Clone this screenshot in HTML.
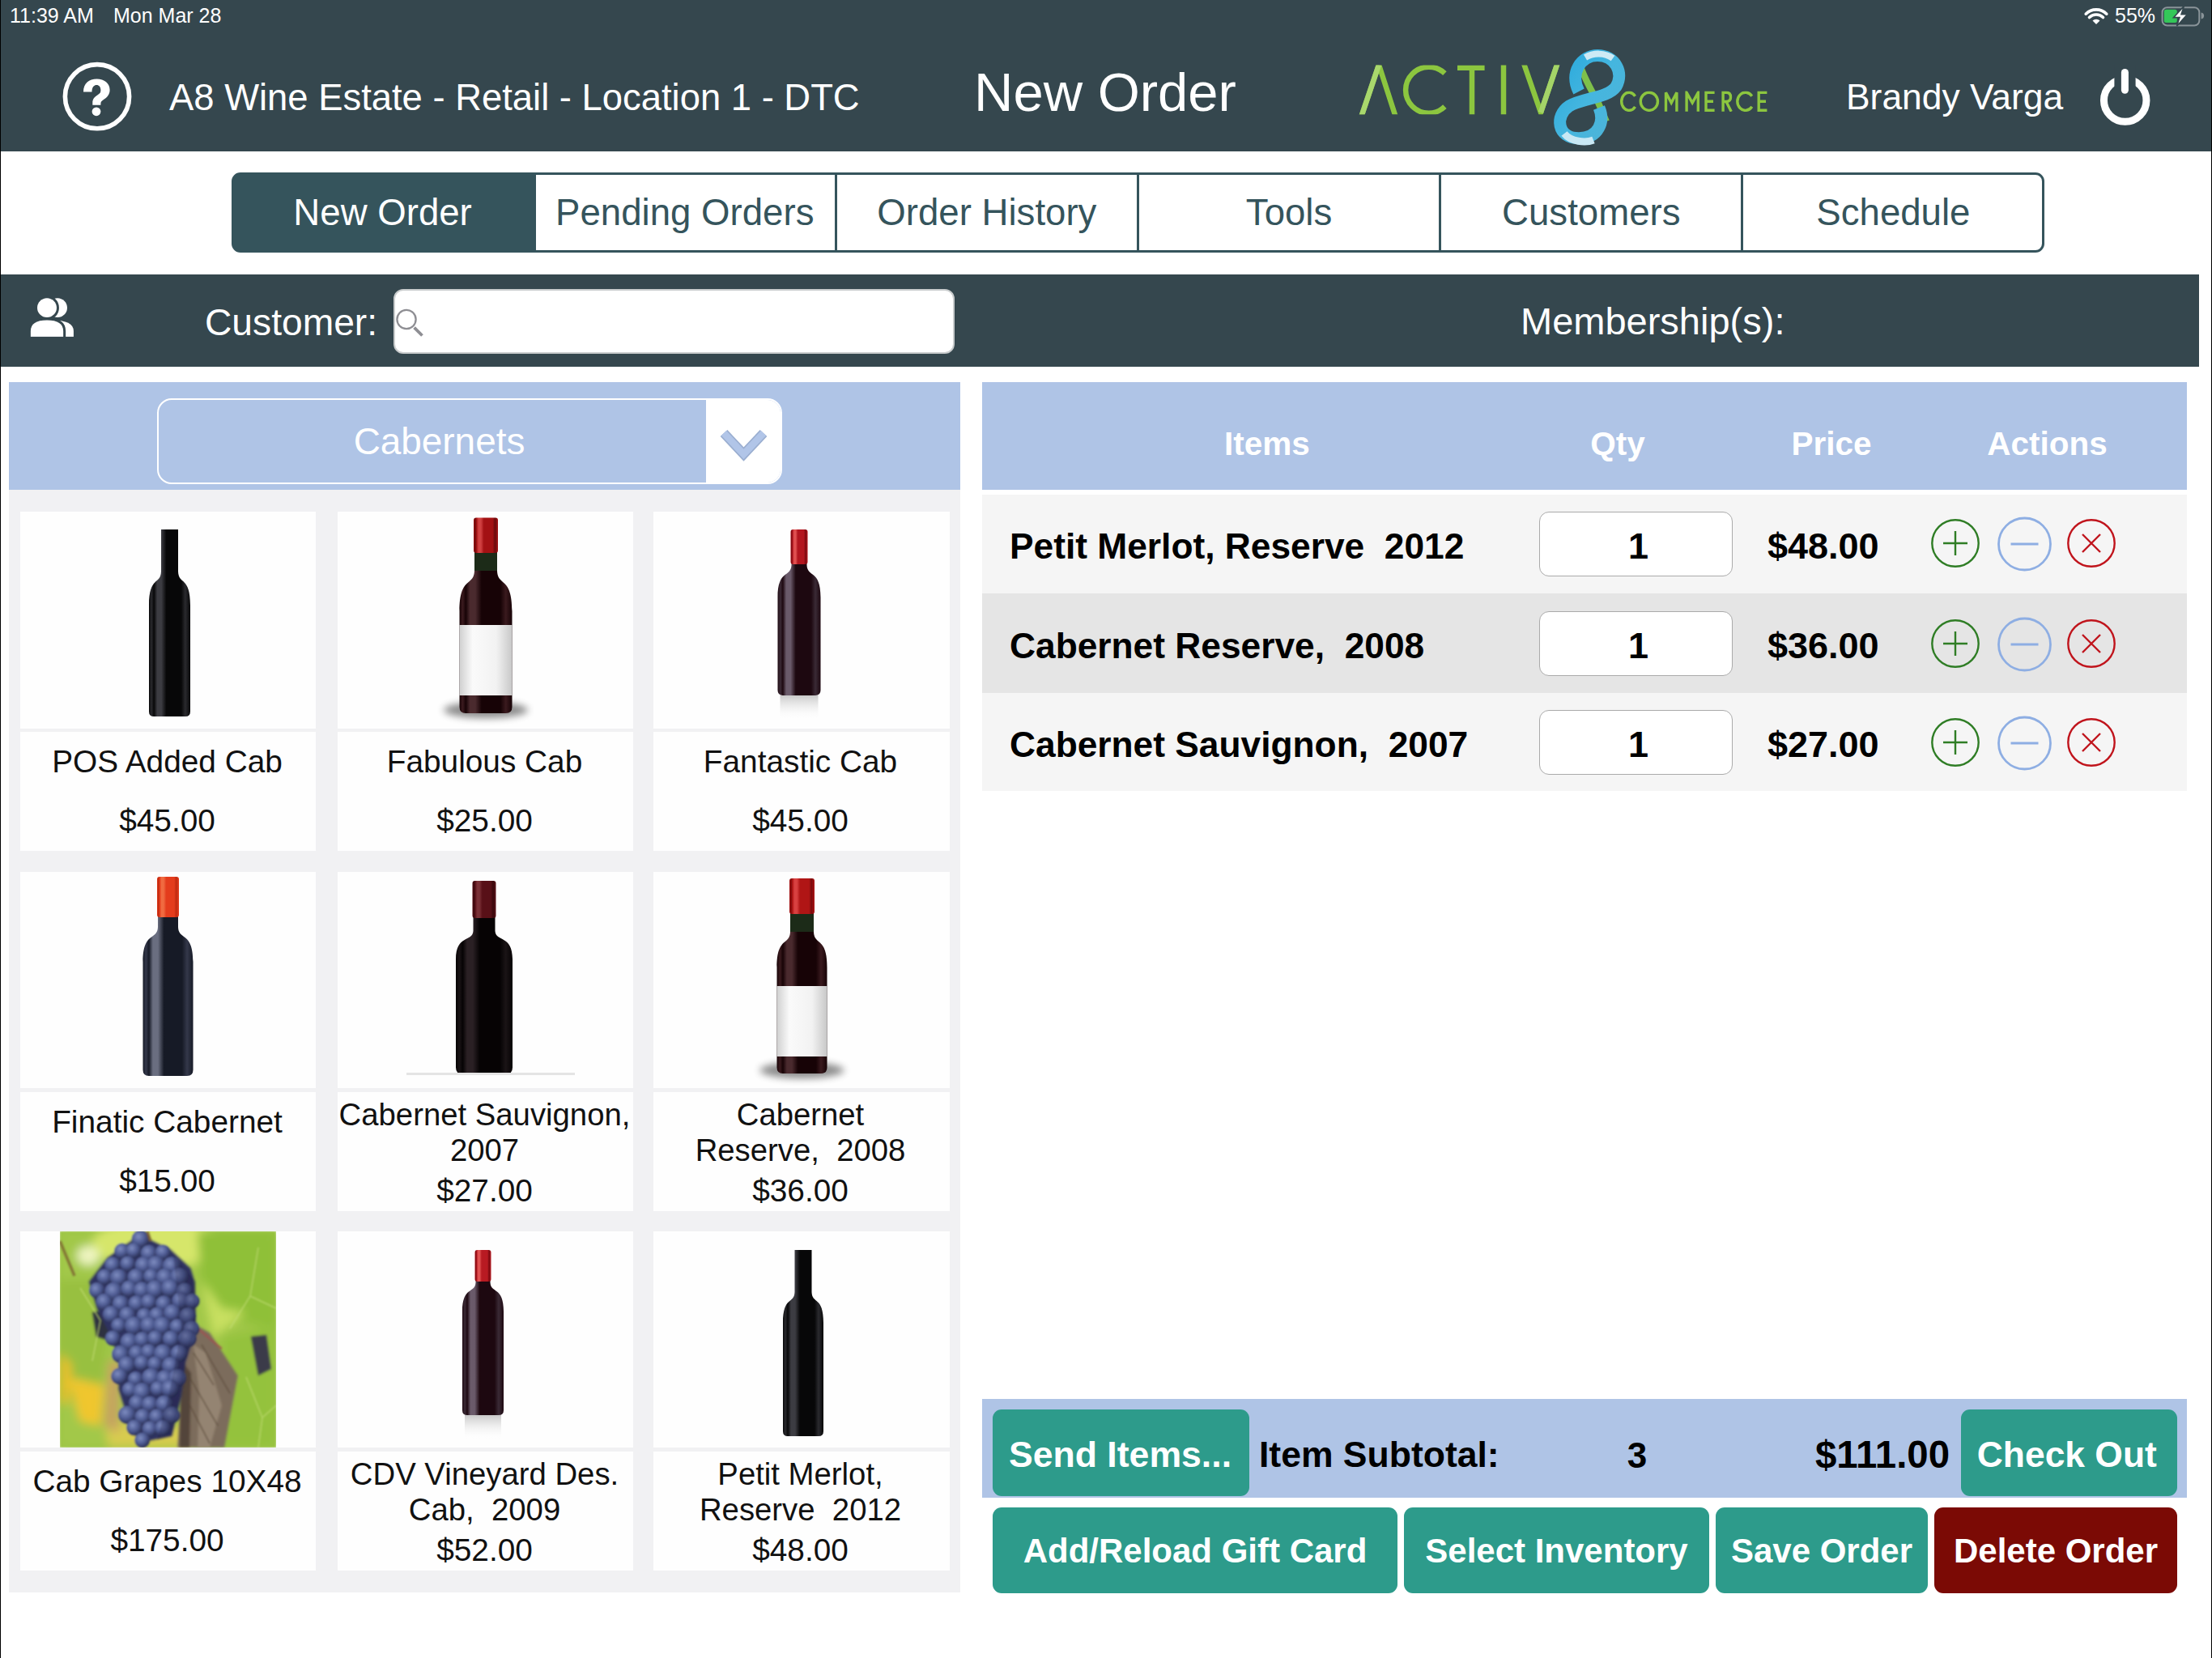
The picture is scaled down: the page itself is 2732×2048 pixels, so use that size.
<!DOCTYPE html>
<html><head><meta charset="utf-8"><style>
html,body{margin:0;padding:0;width:2732px;height:2048px;overflow:hidden;background:#fff}
.t{position:absolute;font-family:"Liberation Sans", sans-serif;line-height:1;white-space:pre}
.r{position:absolute}
</style></head><body>
<div class="r" style="left:0px;top:0px;width:2732px;height:2048px;background:#ffffff;"></div>
<div class="r" style="left:0px;top:0px;width:2732px;height:187px;background:#35474e;"></div>
<div class="t" style="left:12.0px;top:6.8px;font-size:25px;color:#fff;font-weight:400;">11:39 AM</div>
<div class="t" style="left:140.0px;top:6.8px;font-size:25px;color:#fff;font-weight:400;">Mon Mar 28</div>
<div class="t" style="left:2612.0px;top:6.8px;font-size:25px;color:#fff;font-weight:400;">55%</div>
<svg class="r" style="left:2572px;top:6px" width="34" height="26" viewBox="0 0 34 26">
<path d="M17 24 L12.5 19.5 A6.5 6.5 0 0 1 21.5 19.5 Z" fill="#fff"/>
<path d="M8.5 15.5 A12 12 0 0 1 25.5 15.5" stroke="#fff" stroke-width="3.6" fill="none" stroke-linecap="round"/>
<path d="M4.2 11.2 A18 18 0 0 1 29.8 11.2" stroke="#fff" stroke-width="3.6" fill="none" stroke-linecap="round"/>
</svg>
<svg class="r" style="left:2668px;top:7px" width="58" height="28" viewBox="0 0 58 28">
<rect x="2.6" y="2.2" width="45.7" height="22.3" rx="6" fill="none" stroke="#8a9499" stroke-width="2"/>
<rect x="4.8" y="4.7" width="16" height="16.3" rx="2.5" fill="#34c759"/>
<path d="M50.6 8.5 Q54.1 9 54.1 12.5 Q54.1 16 50.6 16.5 Z" fill="#8a9499"/>
<path d="M29.5 0.4 L16.5 14.6 L24 14.6 L20.5 25.2 L33.5 10.8 L26 10.8 Z" fill="#fff" stroke="#35474e" stroke-width="1.6" stroke-linejoin="miter"/>
</svg>
<svg class="r" style="left:74px;top:74px" width="92" height="92" viewBox="0 0 92 92">
<circle cx="46" cy="45.2" r="39.6" stroke="#fff" stroke-width="5.6" fill="none"/>
<path d="M29 39.5 C29 29 36 23.6 45.5 23.6 C55 23.6 61.6 29 61.6 37 C61.6 43 58 46.5 54 49 C51.5 50.5 50.4 52 50.4 54 L50.4 55.8 L40.3 55.8 L40.3 53 C40.3 48 43 45.5 47 43 C49.5 41.5 50.4 40 50.4 37.5 C50.4 33 48 30.9 45.5 30.9 C42 30.9 39.5 33.5 39.5 39.5 Z" fill="#fff"/>
<circle cx="45" cy="63.8" r="5.4" fill="#fff"/>
</svg>
<div class="t" style="left:209.0px;top:97.6px;font-size:45.4px;color:#fff;font-weight:400;">A8 Wine Estate - Retail - Location 1 - DTC</div>
<div class="t" style="left:1203.0px;top:80.3px;font-size:67px;color:#fff;font-weight:400;">New Order</div>
<div class="t" style="left:2280.0px;top:98.4px;font-size:44.4px;color:#fff;font-weight:400;">Brandy Varga</div>
<svg class="r" style="left:2588px;top:80px" width="74" height="80" viewBox="0 0 74 80">
<circle cx="36.7" cy="44" r="26.25" stroke="#fff" stroke-width="9" fill="none"/>
<rect x="23.4" y="0" width="26.2" height="27" fill="#35474e"/>
<line x1="36.4" y1="9.5" x2="36.4" y2="31.3" stroke="#fff" stroke-width="9" stroke-linecap="round"/>
</svg>
<svg class="r" style="left:1670px;top:55px" width="530" height="130" viewBox="0 0 530 130">
<defs>
<linearGradient id="g8" x1="0" y1="0" x2="1" y2="1">
<stop offset="0" stop-color="#29a9dc"/><stop offset="0.5" stop-color="#45b6df"/><stop offset="1" stop-color="#4fb3d6"/>
</linearGradient>
<linearGradient id="g8b" x1="0" y1="0" x2="1" y2="0">
<stop offset="0" stop-color="#cdeaf5"/><stop offset="1" stop-color="#5fc3ea"/>
</linearGradient>
</defs>
<clipPath id="lc"><rect x="0" y="25.5" width="270" height="60.8"/></clipPath>
<g stroke="#8cc63f" stroke-width="6.5" fill="none" stroke-linejoin="miter" clip-path="url(#lc)">
<path d="M11 90 L33 25 L54 90" />
<path d="M11 90 L33 25" stroke="#a9d86d"/>
<path d="M114.4 35.7 A28.5 28.5 0 1 0 114.4 76.7"/>
<path d="M130 28.8 L163.6 28.8 M148 28.8 L148 90"/>
<path d="M187 20 L187 90"/>
<path d="M211.5 22 L233 84 L254 22"/>
<path d="M233 84 L254 22" stroke="#a4d468"/>
</g>
<path d="M281 24 C 286 40, 296 58, 304 72 L314 95" stroke="#7fc04a" stroke-width="8" fill="none"/>
<path d="M280 58 C 268 35, 283 13.5, 303 13.5 C 325 13.5, 336 35, 326 52 C 316 66, 285 66, 268 76 C 250 88, 253 115.7, 280 115.7 C 305 115.7, 312 95, 305 78" stroke="url(#g8)" stroke-width="15" fill="none" stroke-linecap="butt"/>
<path d="M288 16 C 298 10, 312 10, 322 17" stroke="#cdeaf5" stroke-width="8" fill="none"/>
<path d="M262 110 C 270 120, 288 122, 298 118" stroke="#c9e8f4" stroke-width="9" fill="none"/>
<clipPath id="cc"><rect x="330" y="57.5" width="190" height="25.6"/></clipPath>
<g stroke="#8cc63f" stroke-width="3.4" fill="none" stroke-linejoin="miter" clip-path="url(#cc)">
<path d="M349.5 63.8 A9.3 11.05 0 1 0 349.5 76.8"/>
<ellipse cx="366.85" cy="70.3" rx="10.6" ry="11.05"/>
<path d="M387.5 82.8 L387.5 59.3 L394.2 72 L400.9 59.3 L400.9 82.8"/>
<path d="M413.1 82.8 L413.1 59.3 L420.2 72 L427.3 59.3 L427.3 82.8"/>
<path d="M447.6 59.3 L437 59.3 L437 81.3 L447.6 81.3 M437 70.3 L446 70.3"/>
<path d="M458.1 82.8 L458.1 59.3 L462 59.3 Q467.5 59.3 467.5 65 Q467.5 70.5 462 70.5 L458.1 70.5 M462 70.5 L468.2 82.8"/>
<path d="M493.8 63.8 A9.95 11.05 0 1 0 493.8 76.8"/>
<path d="M512.4 59.3 L502.2 59.3 L502.2 81.3 L512.4 81.3 M502.2 70.3 L511 70.3"/>
</g>
</svg>
<div class="r" style="left:286px;top:213px;width:2239px;height:99px;box-sizing:border-box;border:3px solid #35545c;border-radius:11px;background:linear-gradient(to right,#35545c 373.2px,#fff 373.2px)"></div>
<div class="r" style="left:658px;top:213px;width:3px;height:99px;background:#35545c;"></div>
<div class="r" style="left:1031px;top:213px;width:3px;height:99px;background:#35545c;"></div>
<div class="r" style="left:1404px;top:213px;width:3px;height:99px;background:#35545c;"></div>
<div class="r" style="left:1777px;top:213px;width:3px;height:99px;background:#35545c;"></div>
<div class="r" style="left:2150px;top:213px;width:3px;height:99px;background:#35545c;"></div>
<div class="t" style="left:286.0px;top:240.4px;width:373.1666666666667px;text-align:center;font-size:45.6px;color:#fff;font-weight:400;">New Order</div>
<div class="t" style="left:659.2px;top:240.4px;width:373.1666666666667px;text-align:center;font-size:45.6px;color:#35545c;font-weight:400;">Pending Orders</div>
<div class="t" style="left:1032.3px;top:240.4px;width:373.1666666666667px;text-align:center;font-size:45.6px;color:#35545c;font-weight:400;">Order History</div>
<div class="t" style="left:1405.5px;top:240.4px;width:373.1666666666667px;text-align:center;font-size:45.6px;color:#35545c;font-weight:400;">Tools</div>
<div class="t" style="left:1778.7px;top:240.4px;width:373.1666666666667px;text-align:center;font-size:45.6px;color:#35545c;font-weight:400;">Customers</div>
<div class="t" style="left:2151.8px;top:240.4px;width:373.1666666666667px;text-align:center;font-size:45.6px;color:#35545c;font-weight:400;">Schedule</div>
<div class="r" style="left:1px;top:339px;width:2715px;height:114px;background:#35474e;"></div>
<svg class="r" style="left:36px;top:364px" width="58" height="56" viewBox="0 0 58 56">
<circle cx="35" cy="16.15" r="11.95" fill="#fff"/>
<path d="M28 31.6 Q54.9 31.6 54.9 45 L54.9 51.9 L28 51.9 Z" fill="#fff"/>
<circle cx="22" cy="16.15" r="11.95" fill="#fff" stroke="#35474e" stroke-width="6" paint-order="stroke"/>
<path d="M1.86 51.9 L1.86 45 Q1.86 31.4 22 31.4 Q42.16 31.4 42.16 45 L42.16 51.9 Z" fill="#fff" stroke="#35474e" stroke-width="6" paint-order="stroke"/>
<rect x="0" y="51.9" width="58" height="4.1" fill="#35474e"/>
</svg>
<div class="t" style="left:253.0px;top:374.6px;font-size:46.2px;color:#fff;font-weight:400;">Customer:</div>
<div class="r" style="left:486px;top:357px;width:693px;height:80px;box-sizing:border-box;background:#fff;border:2px solid #c9cccd;border-radius:12px"></div>
<svg class="r" style="left:486px;top:378px" width="40" height="40" viewBox="0 0 40 40">
<circle cx="16" cy="16.5" r="11.6" stroke="#8e8e93" stroke-width="2.3" fill="none"/>
<line x1="25.6" y1="26.7" x2="35.5" y2="36.5" stroke="#8e8e93" stroke-width="3.8" stroke-linecap="butt"/>
</svg>
<div class="t" style="left:1878.0px;top:373.2px;font-size:47px;color:#fff;font-weight:400;">Membership(s):</div>
<div class="r" style="left:11px;top:472px;width:1175px;height:1495px;background:#f1f1f3;"></div>
<div class="r" style="left:11px;top:472px;width:1175px;height:133px;background:#afc4e6;"></div>
<div class="r" style="left:194px;top:492px;width:772px;height:106px;box-sizing:border-box;border:2.5px solid #fff;border-radius:18px;overflow:hidden"><div class="r" style="left:676px;top:0;width:100px;height:100%;background:#fff"></div></div>
<svg class="r" style="left:884px;top:522px" width="70" height="52" viewBox="0 0 70 52">
<path d="M10 13 L34.5 39 L59 13" stroke="#9aaed0" stroke-width="12" fill="none" stroke-linecap="butt" stroke-linejoin="miter"/>
<path d="M10 13 L34.5 39 L59 13" stroke="#b1c5e8" stroke-width="8.5" fill="none" stroke-linecap="butt" stroke-linejoin="miter"/>
</svg>
<div class="t" style="left:242.5px;top:522.8px;width:600px;text-align:center;font-size:45.9px;color:#fff;font-weight:400;">Cabernets</div>
<div class="r" style="left:25px;top:632px;width:365px;height:268px;background:#fefefe;"></div>
<div class="r" style="left:25px;top:904px;width:365px;height:147px;background:#fefefe;"></div>
<div class="t" style="left:24.0px;top:922.2px;width:365px;text-align:center;font-size:38.8px;color:#111;font-weight:400;">POS Added Cab</div>
<div class="t" style="left:24.0px;top:995.2px;width:365px;text-align:center;font-size:38.8px;color:#111;font-weight:400;">$45.00</div>
<div class="r" style="left:417px;top:632px;width:365px;height:268px;background:#fefefe;"></div>
<div class="r" style="left:417px;top:904px;width:365px;height:147px;background:#fefefe;"></div>
<div class="t" style="left:416.0px;top:922.2px;width:365px;text-align:center;font-size:38.8px;color:#111;font-weight:400;">Fabulous Cab</div>
<div class="t" style="left:416.0px;top:995.2px;width:365px;text-align:center;font-size:38.8px;color:#111;font-weight:400;">$25.00</div>
<div class="r" style="left:807px;top:632px;width:366px;height:268px;background:#fefefe;"></div>
<div class="r" style="left:807px;top:904px;width:366px;height:147px;background:#fefefe;"></div>
<div class="t" style="left:806.0px;top:922.2px;width:365px;text-align:center;font-size:38.8px;color:#111;font-weight:400;">Fantastic Cab</div>
<div class="t" style="left:806.0px;top:995.2px;width:365px;text-align:center;font-size:38.8px;color:#111;font-weight:400;">$45.00</div>
<div class="r" style="left:25px;top:1077px;width:365px;height:267px;background:#fefefe;"></div>
<div class="r" style="left:25px;top:1349px;width:365px;height:147px;background:#fefefe;"></div>
<div class="t" style="left:24.0px;top:1367.2px;width:365px;text-align:center;font-size:38.8px;color:#111;font-weight:400;">Finatic Cabernet</div>
<div class="t" style="left:24.0px;top:1440.2px;width:365px;text-align:center;font-size:38.8px;color:#111;font-weight:400;">$15.00</div>
<div class="r" style="left:417px;top:1077px;width:365px;height:267px;background:#fefefe;"></div>
<div class="r" style="left:417px;top:1349px;width:365px;height:147px;background:#fefefe;"></div>
<div class="t" style="left:406.0px;top:1357.6px;width:385px;text-align:center;font-size:38.3px;color:#111;font-weight:400;">Cabernet Sauvignon,</div>
<div class="t" style="left:406.0px;top:1401.6px;width:385px;text-align:center;font-size:38.3px;color:#111;font-weight:400;">2007</div>
<div class="t" style="left:416.0px;top:1452.2px;width:365px;text-align:center;font-size:38.8px;color:#111;font-weight:400;">$27.00</div>
<div class="r" style="left:807px;top:1077px;width:366px;height:267px;background:#fefefe;"></div>
<div class="r" style="left:807px;top:1349px;width:366px;height:147px;background:#fefefe;"></div>
<div class="t" style="left:796.0px;top:1357.6px;width:385px;text-align:center;font-size:38.3px;color:#111;font-weight:400;">Cabernet</div>
<div class="t" style="left:796.0px;top:1401.6px;width:385px;text-align:center;font-size:38.3px;color:#111;font-weight:400;">Reserve,&nbsp; 2008</div>
<div class="t" style="left:806.0px;top:1452.2px;width:365px;text-align:center;font-size:38.8px;color:#111;font-weight:400;">$36.00</div>
<div class="r" style="left:25px;top:1521px;width:365px;height:267px;background:#fefefe;"></div>
<div class="r" style="left:25px;top:1793px;width:365px;height:147px;background:#fefefe;"></div>
<div class="t" style="left:24.0px;top:1811.2px;width:365px;text-align:center;font-size:38.8px;color:#111;font-weight:400;">Cab Grapes 10X48</div>
<div class="t" style="left:24.0px;top:1884.2px;width:365px;text-align:center;font-size:38.8px;color:#111;font-weight:400;">$175.00</div>
<div class="r" style="left:417px;top:1521px;width:365px;height:267px;background:#fefefe;"></div>
<div class="r" style="left:417px;top:1793px;width:365px;height:147px;background:#fefefe;"></div>
<div class="t" style="left:406.0px;top:1801.6px;width:385px;text-align:center;font-size:38.3px;color:#111;font-weight:400;">CDV Vineyard Des.</div>
<div class="t" style="left:406.0px;top:1845.6px;width:385px;text-align:center;font-size:38.3px;color:#111;font-weight:400;">Cab,&nbsp; 2009</div>
<div class="t" style="left:416.0px;top:1896.2px;width:365px;text-align:center;font-size:38.8px;color:#111;font-weight:400;">$52.00</div>
<div class="r" style="left:807px;top:1521px;width:366px;height:267px;background:#fefefe;"></div>
<div class="r" style="left:807px;top:1793px;width:366px;height:147px;background:#fefefe;"></div>
<div class="t" style="left:796.0px;top:1801.6px;width:385px;text-align:center;font-size:38.3px;color:#111;font-weight:400;">Petit Merlot,</div>
<div class="t" style="left:796.0px;top:1845.6px;width:385px;text-align:center;font-size:38.3px;color:#111;font-weight:400;">Reserve&nbsp; 2012</div>
<div class="t" style="left:806.0px;top:1896.2px;width:365px;text-align:center;font-size:38.8px;color:#111;font-weight:400;">$48.00</div>
<svg class="r" style="left:0;top:0" width="1200" height="2048" viewBox="0 0 1200 2048">
<defs><filter id="blur" x="-50%" y="-100%" width="200%" height="300%"><feGaussianBlur stdDeviation="5"/></filter><linearGradient id="refl" x1="0" y1="0" x2="0" y2="1"><stop offset="0" stop-color="#666" stop-opacity="0.35"/><stop offset="1" stop-color="#fff" stop-opacity="0"/></linearGradient><linearGradient id="lab" x1="0" y1="0" x2="1" y2="0"><stop offset="0" stop-color="#d0d0d0"/><stop offset="0.25" stop-color="#fafafa"/><stop offset="0.7" stop-color="#f2f2f2"/><stop offset="1" stop-color="#c8c8c8"/></linearGradient><linearGradient id="b1" x1="0" y1="0" x2="1" y2="0"><stop offset="0" stop-color="#070708"/><stop offset="0.06" stop-color="#2a2a2e"/><stop offset="0.12" stop-color="#070708"/><stop offset="0.2" stop-color="#3c3c42"/><stop offset="0.3" stop-color="#3c3c42"/><stop offset="0.42" stop-color="#070708"/><stop offset="0.78" stop-color="#070708"/><stop offset="0.88" stop-color="#2a2a2e"/><stop offset="1" stop-color="#070708"/></linearGradient><linearGradient id="b2" x1="0" y1="0" x2="1" y2="0"><stop offset="0" stop-color="#170306"/><stop offset="0.06" stop-color="#3a1a1e"/><stop offset="0.12" stop-color="#170306"/><stop offset="0.2" stop-color="#4a2a2e"/><stop offset="0.3" stop-color="#4a2a2e"/><stop offset="0.42" stop-color="#170306"/><stop offset="0.78" stop-color="#170306"/><stop offset="0.88" stop-color="#3a1a1e"/><stop offset="1" stop-color="#170306"/></linearGradient><linearGradient id="c2" x1="0" y1="0" x2="1" y2="0"><stop offset="0" stop-color="#a31113"/><stop offset="0.06" stop-color="#6a0a0c"/><stop offset="0.12" stop-color="#a31113"/><stop offset="0.2" stop-color="#d04040"/><stop offset="0.3" stop-color="#d04040"/><stop offset="0.42" stop-color="#a31113"/><stop offset="0.78" stop-color="#a31113"/><stop offset="0.88" stop-color="#6a0a0c"/><stop offset="1" stop-color="#a31113"/></linearGradient><linearGradient id="b3" x1="0" y1="0" x2="1" y2="0"><stop offset="0" stop-color="#1d0810"/><stop offset="0.06" stop-color="#3a2a35"/><stop offset="0.12" stop-color="#1d0810"/><stop offset="0.2" stop-color="#6a5a6a"/><stop offset="0.3" stop-color="#6a5a6a"/><stop offset="0.42" stop-color="#1d0810"/><stop offset="0.78" stop-color="#1d0810"/><stop offset="0.88" stop-color="#3a2a35"/><stop offset="1" stop-color="#1d0810"/></linearGradient><linearGradient id="c3" x1="0" y1="0" x2="1" y2="0"><stop offset="0" stop-color="#b3161f"/><stop offset="0.06" stop-color="#7a0a10"/><stop offset="0.12" stop-color="#b3161f"/><stop offset="0.2" stop-color="#e05050"/><stop offset="0.3" stop-color="#e05050"/><stop offset="0.42" stop-color="#b3161f"/><stop offset="0.78" stop-color="#b3161f"/><stop offset="0.88" stop-color="#7a0a10"/><stop offset="1" stop-color="#b3161f"/></linearGradient><linearGradient id="b4" x1="0" y1="0" x2="1" y2="0"><stop offset="0" stop-color="#161a26"/><stop offset="0.06" stop-color="#34384a"/><stop offset="0.12" stop-color="#161a26"/><stop offset="0.2" stop-color="#6a6e80"/><stop offset="0.3" stop-color="#6a6e80"/><stop offset="0.42" stop-color="#161a26"/><stop offset="0.78" stop-color="#161a26"/><stop offset="0.88" stop-color="#34384a"/><stop offset="1" stop-color="#161a26"/></linearGradient><linearGradient id="c4" x1="0" y1="0" x2="1" y2="0"><stop offset="0" stop-color="#e43c1c"/><stop offset="0.06" stop-color="#c02a10"/><stop offset="0.12" stop-color="#e43c1c"/><stop offset="0.2" stop-color="#f06a40"/><stop offset="0.3" stop-color="#f06a40"/><stop offset="0.42" stop-color="#e43c1c"/><stop offset="0.78" stop-color="#e43c1c"/><stop offset="0.88" stop-color="#c02a10"/><stop offset="1" stop-color="#e43c1c"/></linearGradient><linearGradient id="b5" x1="0" y1="0" x2="1" y2="0"><stop offset="0" stop-color="#060304"/><stop offset="0.06" stop-color="#1a1416"/><stop offset="0.12" stop-color="#060304"/><stop offset="0.2" stop-color="#2a2024"/><stop offset="0.3" stop-color="#2a2024"/><stop offset="0.42" stop-color="#060304"/><stop offset="0.78" stop-color="#060304"/><stop offset="0.88" stop-color="#1a1416"/><stop offset="1" stop-color="#060304"/></linearGradient><linearGradient id="c5" x1="0" y1="0" x2="1" y2="0"><stop offset="0" stop-color="#581017"/><stop offset="0.06" stop-color="#3a080c"/><stop offset="0.12" stop-color="#581017"/><stop offset="0.2" stop-color="#7a3036"/><stop offset="0.3" stop-color="#7a3036"/><stop offset="0.42" stop-color="#581017"/><stop offset="0.78" stop-color="#581017"/><stop offset="0.88" stop-color="#3a080c"/><stop offset="1" stop-color="#581017"/></linearGradient><linearGradient id="b6" x1="0" y1="0" x2="1" y2="0"><stop offset="0" stop-color="#170306"/><stop offset="0.06" stop-color="#3a1a1e"/><stop offset="0.12" stop-color="#170306"/><stop offset="0.2" stop-color="#4a2a2e"/><stop offset="0.3" stop-color="#4a2a2e"/><stop offset="0.42" stop-color="#170306"/><stop offset="0.78" stop-color="#170306"/><stop offset="0.88" stop-color="#3a1a1e"/><stop offset="1" stop-color="#170306"/></linearGradient><linearGradient id="c6" x1="0" y1="0" x2="1" y2="0"><stop offset="0" stop-color="#b01515"/><stop offset="0.06" stop-color="#7a0a0c"/><stop offset="0.12" stop-color="#b01515"/><stop offset="0.2" stop-color="#d84040"/><stop offset="0.3" stop-color="#d84040"/><stop offset="0.42" stop-color="#b01515"/><stop offset="0.78" stop-color="#b01515"/><stop offset="0.88" stop-color="#7a0a0c"/><stop offset="1" stop-color="#b01515"/></linearGradient><linearGradient id="b8" x1="0" y1="0" x2="1" y2="0"><stop offset="0" stop-color="#1d0810"/><stop offset="0.06" stop-color="#3a2a35"/><stop offset="0.12" stop-color="#1d0810"/><stop offset="0.2" stop-color="#6a5a6a"/><stop offset="0.3" stop-color="#6a5a6a"/><stop offset="0.42" stop-color="#1d0810"/><stop offset="0.78" stop-color="#1d0810"/><stop offset="0.88" stop-color="#3a2a35"/><stop offset="1" stop-color="#1d0810"/></linearGradient><linearGradient id="c8" x1="0" y1="0" x2="1" y2="0"><stop offset="0" stop-color="#b81a22"/><stop offset="0.06" stop-color="#7a0a10"/><stop offset="0.12" stop-color="#b81a22"/><stop offset="0.2" stop-color="#e05050"/><stop offset="0.3" stop-color="#e05050"/><stop offset="0.42" stop-color="#b81a22"/><stop offset="0.78" stop-color="#b81a22"/><stop offset="0.88" stop-color="#7a0a10"/><stop offset="1" stop-color="#b81a22"/></linearGradient><linearGradient id="b9" x1="0" y1="0" x2="1" y2="0"><stop offset="0" stop-color="#070708"/><stop offset="0.06" stop-color="#2a2a2e"/><stop offset="0.12" stop-color="#070708"/><stop offset="0.2" stop-color="#3c3c42"/><stop offset="0.3" stop-color="#3c3c42"/><stop offset="0.42" stop-color="#070708"/><stop offset="0.78" stop-color="#070708"/><stop offset="0.88" stop-color="#2a2a2e"/><stop offset="1" stop-color="#070708"/></linearGradient></defs>
<path d="M199.0 654.0 L220.0 654.0 L220.0 706.0 C220.6 722.8 235.0 711.0 235.0 748.0 L235.0 878.9 Q235.0 885.0 228.9 885.0 L190.1 885.0 Q184.0 885.0 184.0 878.9 L184.0 748.0 C184.0 711.0 198.4 722.8 199.0 706.0 Z" fill="url(#b1)"/>
<ellipse cx="600.0" cy="877.0" rx="52.0" ry="10" fill="#000" opacity="0.45" filter="url(#blur)"/><path d="M586.0 642.5 L614.0 642.5 L614.0 705.0 C614.7 725.0 632.5 711.0 632.5 755.0 L632.5 873.2 Q632.5 881.0 624.7 881.0 L575.3 881.0 Q567.5 881.0 567.5 873.2 L567.5 755.0 C567.5 711.0 585.3 725.0 586.0 705.0 Z" fill="url(#b2)"/><rect x="585.0" y="639.5" width="30.0" height="43.5" fill="url(#c2)" rx="3"/><rect x="586.0" y="683.0" width="28.0" height="22.0" fill="#1c2b18"/><rect x="567.5" y="772.0" width="65.0" height="87.0" fill="url(#lab)"/>
<rect x="963.5" y="859.0" width="47.0" height="30" fill="url(#refl)"/><path d="M977.5 657.0 L996.5 657.0 L996.5 698.0 C997.2 714.0 1013.5 702.8 1013.5 738.0 L1013.5 852.6 Q1013.5 859.0 1007.1 859.0 L966.9 859.0 Q960.5 859.0 960.5 852.6 L960.5 738.0 C960.5 702.8 976.8 714.0 977.5 698.0 Z" fill="url(#b3)"/><rect x="976.5" y="654.0" width="21.0" height="43.0" fill="url(#c3)" rx="3"/>
<path d="M195.0 1086.0 L220.0 1086.0 L220.0 1145.0 C220.7 1162.2 238.5 1150.2 238.5 1188.0 L238.5 1321.6 Q238.5 1329.0 231.1 1329.0 L183.9 1329.0 Q176.5 1329.0 176.5 1321.6 L176.5 1188.0 C176.5 1150.2 194.3 1162.2 195.0 1145.0 Z" fill="url(#b4)"/><rect x="194.0" y="1083.0" width="27.0" height="50.0" fill="url(#c4)" rx="3"/>
<path d="M584.5 1091.0 L611.5 1091.0 L611.5 1150.0 C612.4 1164.0 633.0 1154.2 633.0 1185.0 L633.0 1318.6 Q633.0 1327.0 624.6 1327.0 L571.4 1327.0 Q563.0 1327.0 563.0 1318.6 L563.0 1185.0 C563.0 1154.2 583.6 1164.0 584.5 1150.0 Z" fill="url(#b5)"/><rect x="583.5" y="1088.0" width="29.0" height="46.0" fill="url(#c5)" rx="3"/>
<rect x="502" y="1325" width="208" height="3" fill="#e4e4e4"/>
<ellipse cx="990.5" cy="1322.0" rx="52.0" ry="10" fill="#000" opacity="0.45" filter="url(#blur)"/><path d="M976.0 1088.0 L1005.0 1088.0 L1005.0 1151.0 C1005.7 1168.6 1021.5 1156.3 1021.5 1195.0 L1021.5 1318.6 Q1021.5 1326.0 1014.1 1326.0 L966.9 1326.0 Q959.5 1326.0 959.5 1318.6 L959.5 1195.0 C959.5 1156.3 975.3 1168.6 976.0 1151.0 Z" fill="url(#b6)"/><rect x="975.0" y="1085.0" width="31.0" height="44.0" fill="url(#c6)" rx="3"/><rect x="976.0" y="1129.0" width="29.0" height="22.0" fill="#1c2b18"/><rect x="959.5" y="1218.0" width="62.0" height="87.0" fill="url(#lab)"/>
<rect x="574.0" y="1748.0" width="45.0" height="30" fill="url(#refl)"/><path d="M587.5 1547.0 L605.5 1547.0 L605.5 1584.0 C606.2 1598.4 622.0 1588.3 622.0 1620.0 L622.0 1741.9 Q622.0 1748.0 615.9 1748.0 L577.1 1748.0 Q571.0 1748.0 571.0 1741.9 L571.0 1620.0 C571.0 1588.3 586.8 1598.4 587.5 1584.0 Z" fill="url(#b8)"/><rect x="586.5" y="1544.0" width="20.0" height="39.0" fill="url(#c8)" rx="3"/>
<path d="M981.5 1544.0 L1002.5 1544.0 L1002.5 1596.0 C1003.1 1611.2 1017.0 1600.6 1017.0 1634.0 L1017.0 1768.0 Q1017.0 1774.0 1011.0 1774.0 L973.0 1774.0 Q967.0 1774.0 967.0 1768.0 L967.0 1634.0 C967.0 1600.6 980.9 1611.2 981.5 1596.0 Z" fill="url(#b9)"/>
</svg>
<svg class="r" style="left:74px;top:1521px" width="267" height="267" viewBox="0 0 267 267">
<defs><radialGradient id="gr" cx="0.38" cy="0.35" r="0.65"><stop offset="0" stop-color="#7e8cc0"/><stop offset="0.55" stop-color="#4e5b92"/><stop offset="1" stop-color="#2a2f55"/></radialGradient><filter id="gb" x="-10%" y="-10%" width="120%" height="120%"><feGaussianBlur stdDeviation="6"/></filter><filter id="gb2"><feGaussianBlur stdDeviation="1.2"/></filter><clipPath id="gclip"><rect width="267" height="267"/></clipPath></defs>
<filter id="gsoft"><feGaussianBlur stdDeviation="0.9"/></filter>
<g clip-path="url(#gclip)"><g filter="url(#gsoft)">
<rect width="267" height="267" fill="#9cc444"/>
<g filter="url(#gb)">
<rect x="0" y="0" width="267" height="267" fill="#a2c84a"/>
<ellipse cx="120" cy="15" rx="80" ry="30" fill="#d6e66a"/>
<ellipse cx="35" cy="30" rx="14" ry="12" fill="#eef5c0"/>
<path d="M170 0 L267 0 L267 120 L215 110 L175 70 Z" fill="#8fc038"/>
<path d="M175 60 L200 95 L230 100 L190 130 Z" fill="#c8e060"/>
<path d="M0 60 L45 60 L60 130 L50 200 L0 210 Z" fill="#98c040"/>
<path d="M10 180 L55 190 L50 240 L25 235 Z" fill="#f0c62e"/>
<path d="M0 150 L15 165 L10 215 L0 210 Z" fill="#e8c02a"/>
<path d="M55 235 L150 240 L160 267 L60 267 Z" fill="#d8cc50"/>
<path d="M200 130 L267 115 L267 267 L195 267 Z" fill="#94c23e"/>
<path d="M60 160 L75 160 L72 250 L55 240 Z" fill="#c8a060"/>
</g>
<path d="M161.7 112 L185 125 L219.8 178.3 L210 230 L203.2 267 L145.1 267 L153.4 145.1 Z" fill="#7b6c5c" filter="url(#gb2)"/>
<path d="M165 140 L180 150 L200 215 L185 267 L170 267 L172 200 Z" fill="#9b8b78" opacity="0.8" filter="url(#gb2)"/>
<path d="M150 160 L162 175 L160 267 L148 267 Z" fill="#4a3a30" opacity="0.8" filter="url(#gb2)"/>
<path d="M168 118 L200 145" stroke="#a05050" stroke-width="3" opacity="0.7"/>
<path d="M236 130 L255 128 L261 170 L245 178 Z" fill="#3a3a4a" filter="url(#gb2)"/>
<path d="M40 100 L70 95 L75 140 L45 130 Z" fill="#2e3040" filter="url(#gb2)"/>
<path d="M98.7 4 L136.8 22.4 L161.7 45.6 L166.7 62.2 L168.4 120.3 L155.1 161.7 L150.1 203.2 L138.5 252.9 L98.7 261.2 L85.4 236.4 L72.2 195 L73.8 161.7 L62.2 128.5 L45.6 95.4 L35.7 62.2 L58.9 32.3 Z" fill="#2e3260" filter="url(#gb2)"/>
<circle cx="99.7" cy="9.7" r="11.2" fill="url(#gr)"/>
<circle cx="76.8" cy="24.4" r="9.8" fill="url(#gr)"/>
<circle cx="91.2" cy="23.6" r="9.7" fill="url(#gr)"/>
<circle cx="110.0" cy="27.1" r="10.4" fill="url(#gr)"/>
<circle cx="127.4" cy="25.9" r="9.6" fill="url(#gr)"/>
<circle cx="65.1" cy="41.4" r="10.0" fill="url(#gr)"/>
<circle cx="83.8" cy="40.0" r="9.6" fill="url(#gr)"/>
<circle cx="103.5" cy="42.0" r="10.8" fill="url(#gr)"/>
<circle cx="118.7" cy="41.4" r="11.1" fill="url(#gr)"/>
<circle cx="138.1" cy="42.9" r="11.3" fill="url(#gr)"/>
<circle cx="55.3" cy="56.4" r="9.8" fill="url(#gr)"/>
<circle cx="72.7" cy="57.3" r="10.9" fill="url(#gr)"/>
<circle cx="94.3" cy="56.9" r="10.8" fill="url(#gr)"/>
<circle cx="112.9" cy="55.6" r="9.8" fill="url(#gr)"/>
<circle cx="130.0" cy="57.0" r="11.3" fill="url(#gr)"/>
<circle cx="147.4" cy="56.3" r="11.4" fill="url(#gr)"/>
<circle cx="45.8" cy="73.0" r="9.9" fill="url(#gr)"/>
<circle cx="66.7" cy="74.5" r="11.4" fill="url(#gr)"/>
<circle cx="85.6" cy="70.9" r="10.3" fill="url(#gr)"/>
<circle cx="101.4" cy="72.8" r="10.5" fill="url(#gr)"/>
<circle cx="117.6" cy="71.8" r="11.5" fill="url(#gr)"/>
<circle cx="136.3" cy="70.1" r="11.2" fill="url(#gr)"/>
<circle cx="153.8" cy="73.3" r="9.8" fill="url(#gr)"/>
<circle cx="54.9" cy="87.2" r="10.4" fill="url(#gr)"/>
<circle cx="75.2" cy="89.4" r="10.5" fill="url(#gr)"/>
<circle cx="94.6" cy="89.3" r="10.2" fill="url(#gr)"/>
<circle cx="109.9" cy="87.1" r="9.9" fill="url(#gr)"/>
<circle cx="128.3" cy="89.4" r="10.1" fill="url(#gr)"/>
<circle cx="149.3" cy="85.8" r="10.9" fill="url(#gr)"/>
<circle cx="163.4" cy="86.2" r="9.5" fill="url(#gr)"/>
<circle cx="63.5" cy="102.6" r="10.6" fill="url(#gr)"/>
<circle cx="83.3" cy="103.3" r="10.4" fill="url(#gr)"/>
<circle cx="104.3" cy="104.0" r="9.5" fill="url(#gr)"/>
<circle cx="120.1" cy="103.6" r="10.2" fill="url(#gr)"/>
<circle cx="138.9" cy="100.8" r="10.7" fill="url(#gr)"/>
<circle cx="158.0" cy="104.4" r="10.5" fill="url(#gr)"/>
<circle cx="72.8" cy="116.3" r="9.6" fill="url(#gr)"/>
<circle cx="91.5" cy="116.8" r="11.5" fill="url(#gr)"/>
<circle cx="110.2" cy="116.3" r="11.1" fill="url(#gr)"/>
<circle cx="126.5" cy="116.8" r="11.4" fill="url(#gr)"/>
<circle cx="145.0" cy="117.8" r="9.7" fill="url(#gr)"/>
<circle cx="162.6" cy="120.4" r="10.0" fill="url(#gr)"/>
<circle cx="65.3" cy="132.1" r="9.6" fill="url(#gr)"/>
<circle cx="85.7" cy="136.5" r="11.1" fill="url(#gr)"/>
<circle cx="101.8" cy="133.9" r="10.0" fill="url(#gr)"/>
<circle cx="117.9" cy="132.0" r="9.8" fill="url(#gr)"/>
<circle cx="137.2" cy="132.8" r="10.3" fill="url(#gr)"/>
<circle cx="157.6" cy="132.3" r="11.3" fill="url(#gr)"/>
<circle cx="75.1" cy="151.9" r="11.1" fill="url(#gr)"/>
<circle cx="94.8" cy="150.5" r="10.0" fill="url(#gr)"/>
<circle cx="109.8" cy="148.8" r="9.8" fill="url(#gr)"/>
<circle cx="127.3" cy="150.9" r="11.3" fill="url(#gr)"/>
<circle cx="147.2" cy="150.9" r="10.6" fill="url(#gr)"/>
<circle cx="82.6" cy="165.1" r="10.9" fill="url(#gr)"/>
<circle cx="101.3" cy="162.6" r="9.7" fill="url(#gr)"/>
<circle cx="117.6" cy="163.9" r="9.6" fill="url(#gr)"/>
<circle cx="136.8" cy="166.0" r="10.9" fill="url(#gr)"/>
<circle cx="73.5" cy="179.0" r="10.4" fill="url(#gr)"/>
<circle cx="93.6" cy="182.5" r="9.6" fill="url(#gr)"/>
<circle cx="112.7" cy="180.4" r="11.4" fill="url(#gr)"/>
<circle cx="129.8" cy="182.0" r="10.8" fill="url(#gr)"/>
<circle cx="144.9" cy="181.3" r="11.1" fill="url(#gr)"/>
<circle cx="86.4" cy="195.5" r="9.7" fill="url(#gr)"/>
<circle cx="101.5" cy="198.2" r="11.2" fill="url(#gr)"/>
<circle cx="121.1" cy="194.4" r="9.6" fill="url(#gr)"/>
<circle cx="136.1" cy="194.3" r="11.2" fill="url(#gr)"/>
<circle cx="95.4" cy="212.2" r="10.4" fill="url(#gr)"/>
<circle cx="111.1" cy="213.7" r="10.2" fill="url(#gr)"/>
<circle cx="128.7" cy="213.4" r="10.6" fill="url(#gr)"/>
<circle cx="83.3" cy="226.8" r="11.4" fill="url(#gr)"/>
<circle cx="102.4" cy="229.0" r="10.0" fill="url(#gr)"/>
<circle cx="119.6" cy="229.1" r="9.8" fill="url(#gr)"/>
<circle cx="138.0" cy="227.2" r="10.6" fill="url(#gr)"/>
<circle cx="92.1" cy="242.6" r="10.0" fill="url(#gr)"/>
<circle cx="111.3" cy="243.9" r="9.7" fill="url(#gr)"/>
<circle cx="127.0" cy="242.8" r="9.8" fill="url(#gr)"/>
<circle cx="101.8" cy="258.2" r="9.6" fill="url(#gr)"/>
<path d="M140 30 L168 62 L168 120 L155 162 L150 203 L138 253 L120 258 L135 200 L150 120 Z" fill="#1a1d3a" opacity="0.25"/>
<path d="M0 12 L18 55" stroke="#7a5a30" stroke-width="4" opacity="0.7"/>
<path d="M108 0 L112 12" stroke="#7a5a30" stroke-width="4" opacity="0.8"/>
<g stroke="#c8e07a" stroke-width="1.5" opacity="0.6" fill="none"><path d="M245 20 L235 80 L210 120"/><path d="M235 80 L267 95"/><path d="M230 180 L250 230 L245 267"/><path d="M250 230 L267 215"/><path d="M25 70 L50 110 L40 160"/></g>
<g stroke="#5a4a3a" stroke-width="2" opacity="0.55"><path d="M165 150 L190 190"/><path d="M160 180 L195 240"/><path d="M158 210 L185 262"/><path d="M175 140 L210 200"/></g>
</g></g></svg>
<div class="r" style="left:1213px;top:472px;width:1488px;height:133px;background:#afc4e6;"></div>
<div class="t" style="left:1365.0px;top:528.2px;width:400px;text-align:center;font-size:40.5px;color:#fff;font-weight:700;">Items</div>
<div class="t" style="left:1798.0px;top:528.2px;width:400px;text-align:center;font-size:40.5px;color:#fff;font-weight:700;">Qty</div>
<div class="t" style="left:2062.0px;top:528.2px;width:400px;text-align:center;font-size:40.5px;color:#fff;font-weight:700;">Price</div>
<div class="t" style="left:2328.5px;top:528.2px;width:400px;text-align:center;font-size:40.5px;color:#fff;font-weight:700;">Actions</div>
<div class="r" style="left:1213px;top:611px;width:1488px;height:122px;background:#f5f5f5;"></div>
<div class="t" style="left:1247.0px;top:652.5px;font-size:44.3px;color:#000;font-weight:700;">Petit Merlot, Reserve&nbsp; 2012</div>
<div class="r" style="left:1901px;top:632.0px;width:239px;height:79.6px;box-sizing:border-box;background:#fff;border:1.7px solid #aaaaaa;border-radius:12px"></div>
<div class="t" style="left:1923.5px;top:651.9px;width:200px;text-align:center;font-size:45px;color:#000;font-weight:700;">1</div>
<div class="t" style="left:2183.0px;top:651.9px;font-size:45px;color:#000;font-weight:700;">$48.00</div>
<svg class="r" style="left:2370px;top:631.0px" width="260" height="80" viewBox="0 0 260 80">
<circle cx="45" cy="40" r="28.7" stroke="#2f7d25" stroke-width="2.4" fill="none"/>
<path d="M30 40 H60 M45 25 V55" stroke="#2f7d25" stroke-width="2.4"/>
<circle cx="130.5" cy="41" r="32" stroke="#8eaee3" stroke-width="2.8" fill="none"/>
<path d="M113.5 41 H147.5" stroke="#8eaee3" stroke-width="2.8"/>
<circle cx="213" cy="40" r="28.7" stroke="#c0141c" stroke-width="2.4" fill="none"/>
<path d="M202 29 L224 51 M224 29 L202 51" stroke="#c0141c" stroke-width="2.4"/>
</svg>
<div class="r" style="left:1213px;top:733px;width:1488px;height:123px;background:#e5e5e5;"></div>
<div class="t" style="left:1247.0px;top:776.0px;font-size:44.3px;color:#000;font-weight:700;">Cabernet Reserve,&nbsp; 2008</div>
<div class="r" style="left:1901px;top:755.2px;width:239px;height:79.6px;box-sizing:border-box;background:#fff;border:1.7px solid #aaaaaa;border-radius:12px"></div>
<div class="t" style="left:1923.5px;top:775.4px;width:200px;text-align:center;font-size:45px;color:#000;font-weight:700;">1</div>
<div class="t" style="left:2183.0px;top:775.4px;font-size:45px;color:#000;font-weight:700;">$36.00</div>
<svg class="r" style="left:2370px;top:754.5px" width="260" height="80" viewBox="0 0 260 80">
<circle cx="45" cy="40" r="28.7" stroke="#2f7d25" stroke-width="2.4" fill="none"/>
<path d="M30 40 H60 M45 25 V55" stroke="#2f7d25" stroke-width="2.4"/>
<circle cx="130.5" cy="41" r="32" stroke="#8eaee3" stroke-width="2.8" fill="none"/>
<path d="M113.5 41 H147.5" stroke="#8eaee3" stroke-width="2.8"/>
<circle cx="213" cy="40" r="28.7" stroke="#c0141c" stroke-width="2.4" fill="none"/>
<path d="M202 29 L224 51 M224 29 L202 51" stroke="#c0141c" stroke-width="2.4"/>
</svg>
<div class="r" style="left:1213px;top:856px;width:1488px;height:121px;background:#f5f5f5;"></div>
<div class="t" style="left:1247.0px;top:898.0px;font-size:44.3px;color:#000;font-weight:700;">Cabernet Sauvignon,&nbsp; 2007</div>
<div class="r" style="left:1901px;top:877.2px;width:239px;height:79.6px;box-sizing:border-box;background:#fff;border:1.7px solid #aaaaaa;border-radius:12px"></div>
<div class="t" style="left:1923.5px;top:897.4px;width:200px;text-align:center;font-size:45px;color:#000;font-weight:700;">1</div>
<div class="t" style="left:2183.0px;top:897.4px;font-size:45px;color:#000;font-weight:700;">$27.00</div>
<svg class="r" style="left:2370px;top:876.5px" width="260" height="80" viewBox="0 0 260 80">
<circle cx="45" cy="40" r="28.7" stroke="#2f7d25" stroke-width="2.4" fill="none"/>
<path d="M30 40 H60 M45 25 V55" stroke="#2f7d25" stroke-width="2.4"/>
<circle cx="130.5" cy="41" r="32" stroke="#8eaee3" stroke-width="2.8" fill="none"/>
<path d="M113.5 41 H147.5" stroke="#8eaee3" stroke-width="2.8"/>
<circle cx="213" cy="40" r="28.7" stroke="#c0141c" stroke-width="2.4" fill="none"/>
<path d="M202 29 L224 51 M224 29 L202 51" stroke="#c0141c" stroke-width="2.4"/>
</svg>
<div class="r" style="left:1213px;top:1728px;width:1488px;height:122px;background:#afc4e6;"></div>
<div class="r" style="left:1226px;top:1741px;width:317px;height:107px;background:#2d9b8b;border-radius:11px"></div>
<div class="r" style="left:2422px;top:1741px;width:267px;height:107px;background:#2d9b8b;border-radius:11px"></div>
<div class="t" style="left:1225.0px;top:1774.9px;width:317px;text-align:center;font-size:44.6px;color:#fff;font-weight:700;">Send Items...</div>
<div class="t" style="left:1555.0px;top:1775.0px;font-size:44.5px;color:#000;font-weight:700;">Item Subtotal:</div>
<div class="t" style="left:1972.0px;top:1775.5px;width:100px;text-align:center;font-size:44px;color:#000;font-weight:700;">3</div>
<div class="t" style="left:2242.0px;top:1772.6px;font-size:47.4px;color:#000;font-weight:700;">$111.00</div>
<div class="t" style="left:2419.3px;top:1775.1px;width:267px;text-align:center;font-size:44.4px;color:#fff;font-weight:700;">Check Out</div>
<div class="r" style="left:1226px;top:1862px;width:500px;height:106px;background:#2d9b8b;border-radius:11px"></div>
<div class="t" style="left:1226.0px;top:1894.8px;width:500px;text-align:center;font-size:42px;color:#fff;font-weight:700;">Add/Reload Gift Card</div>
<div class="r" style="left:1734px;top:1862px;width:377px;height:106px;background:#2d9b8b;border-radius:11px"></div>
<div class="t" style="left:1734.0px;top:1894.8px;width:377px;text-align:center;font-size:42px;color:#fff;font-weight:700;">Select Inventory</div>
<div class="r" style="left:2119px;top:1862px;width:262px;height:106px;background:#2d9b8b;border-radius:11px"></div>
<div class="t" style="left:2119.0px;top:1894.8px;width:262px;text-align:center;font-size:42px;color:#fff;font-weight:700;">Save Order</div>
<div class="r" style="left:2389px;top:1862px;width:300px;height:106px;background:#7b0a05;border-radius:11px"></div>
<div class="t" style="left:2389.0px;top:1894.8px;width:300px;text-align:center;font-size:42px;color:#fff;font-weight:700;">Delete Order</div>
<div class="r" style="left:0px;top:0px;width:1px;height:2048px;background:#000;"></div>
<div class="r" style="left:2731px;top:0px;width:1px;height:2048px;background:#000;"></div>
</body></html>
